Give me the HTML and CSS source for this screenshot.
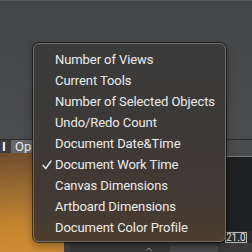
FILE: index.html
```html
<!DOCTYPE html>
<html>
<head>
<meta charset="utf-8">
<link rel="stylesheet" href="styles.css">
</head>
<body>
<div class="app">
  <div class="top"></div>
  <div class="tabbar">
    <span class="tab-i">I</span>
    <span class="tab-op">Op</span>
    <span class="tab-rest"></span>
  </div>
  <div class="lower">
    <div class="canvas"></div>
    <div class="middle">
      <div class="mid-main"></div>
      <div class="mid-bar">
        <span class="mid-dark"></span>
        <span class="caret"><svg width="6" height="4" viewBox="0 0 6 4"><path d="M0.5 3.5 L3 1 L5.5 3.5" fill="none" stroke="#9a9a9a" stroke-width="1"/></svg></span>
        <span class="mid-box"></span>
      </div>
    </div>
    <div class="side">
      <div class="side-gray"></div>
      <div class="side-dark"></div>
      <div class="side-field"><span class="zoom-box">21.0</span></div>
      <div class="side-bottom"></div>
    </div>
  </div>
  <div class="menu">
    <div class="item">Number of Views</div>
    <div class="item">Current Tools</div>
    <div class="item">Number of Selected Objects</div>
    <div class="item">Undo/Redo Count</div>
    <div class="item">Document Date&amp;Time</div>
    <div class="item checked"><svg class="check" width="10" height="10" viewBox="0 0 10 10"><path d="M1 5.2 L3.8 8.5 L9 1" fill="none" stroke="#e8e8e8" stroke-width="1.4" stroke-linecap="round" stroke-linejoin="round"/></svg>Document Work Time</div>
    <div class="item">Canvas Dimensions</div>
    <div class="item">Artboard Dimensions</div>
    <div class="item">Document Color Profile</div>
  </div>
</div>
</body>
</html>
```
FILE: styles.css
```css
html, body {
  margin: 0;
  padding: 0;
  width: 252px;
  height: 252px;
  overflow: hidden;
  background: #47484a;
}
.app {
  position: relative;
  width: 252px;
  height: 252px;
  display: flex;
  flex-direction: column;
  font-family: "Roboto", "Liberation Sans", sans-serif;
}
.top {
  height: 138px;
  border-top: 1px solid #58595b;
  background: linear-gradient(180deg, #444547 0%, #4b4c4e 100%);
}
.tabbar {
  height: 13px;
  display: flex;
  border-top: 1px solid #2b2b2c;
  background: #3c3c3d;
  font-size: 13px;
  line-height: 13px;
}
.tab-i {
  width: 11px;
  color: #f4f4f4;
  padding-left: 2px;
  box-sizing: border-box;
  font-weight: bold;
}
.tab-op {
  width: 40px;
  background: #66676a;
  color: #eeeeee;
  padding-left: 4px;
  box-sizing: border-box;
}
.tab-rest {
  flex: 1;
  background: #4a4b4d;
}
.lower {
  flex: 1;
  display: grid;
  grid-template-columns: 64px 1fr 26px;
}
.canvas {
  background: linear-gradient(175deg, #6e4d2c 0%, #a06f32 40%, #c8872f 75%, #d08d36 100%);
}
.middle {
  display: flex;
  flex-direction: column;
}
.mid-main {
  flex: 1;
  background: #2a2a2b;
}
.mid-bar {
  height: 9px;
  background: #3a3a3b;
  display: flex;
  align-items: flex-end;
}
.mid-dark {
  width: 6px;
  height: 9px;
  background: #444446;
}
.caret {
  margin-left: 76px;
  width: 6px;
  height: 5px;
  display: flex;
}
.mid-box {
  margin-left: 18px;
  width: 48px;
  height: 6px;
  background: #4a4a4c;
}
.side {
  display: flex;
  flex-direction: column;
}
.side-gray {
  height: 3px;
  background: #4a4b4d;
  border-bottom: 1px solid #77787a;
}
.side-dark {
  flex: 1;
  background: #1f2021;
}
.side-field {
  height: 12px;
  background: #2a2a2b;
  display: flex;
  align-items: center;
}
.zoom-box {
  width: 22px;
  height: 11px;
  box-sizing: border-box;
  border: 1px solid #b8b8b8;
  color: #e4e4e4;
  font-size: 10px;
  line-height: 9px;
  text-align: right;
  padding-right: 1px;
  margin-left: -1px;
  white-space: nowrap;
}
.side-bottom {
  height: 9px;
  background: #3a3a3b;
}
.menu {
  position: absolute;
  left: 33px;
  top: 43px;
  width: 193px;
  height: 199px;
  box-sizing: border-box;
  padding: 5px 0 3px 0;
  border-radius: 6px;
  border: 1px solid #6e6d6c;
  box-shadow: 0 0 0 1px rgba(0, 0, 0, 0.55), 0 4px 10px rgba(0, 0, 0, 0.35);
  background: linear-gradient(180deg, #3b3b3b 0%, #3c3937 45%, #433a33 80%, #4d3d2f 100%);
  color: #ececec;
  font-size: 13px;
  letter-spacing: -0.08px;
}
.item {
  height: 21px;
  line-height: 21px;
  padding-left: 21px;
  position: relative;
  white-space: nowrap;
}
.check {
  position: absolute;
  left: 8px;
  top: 6px;
}
```
